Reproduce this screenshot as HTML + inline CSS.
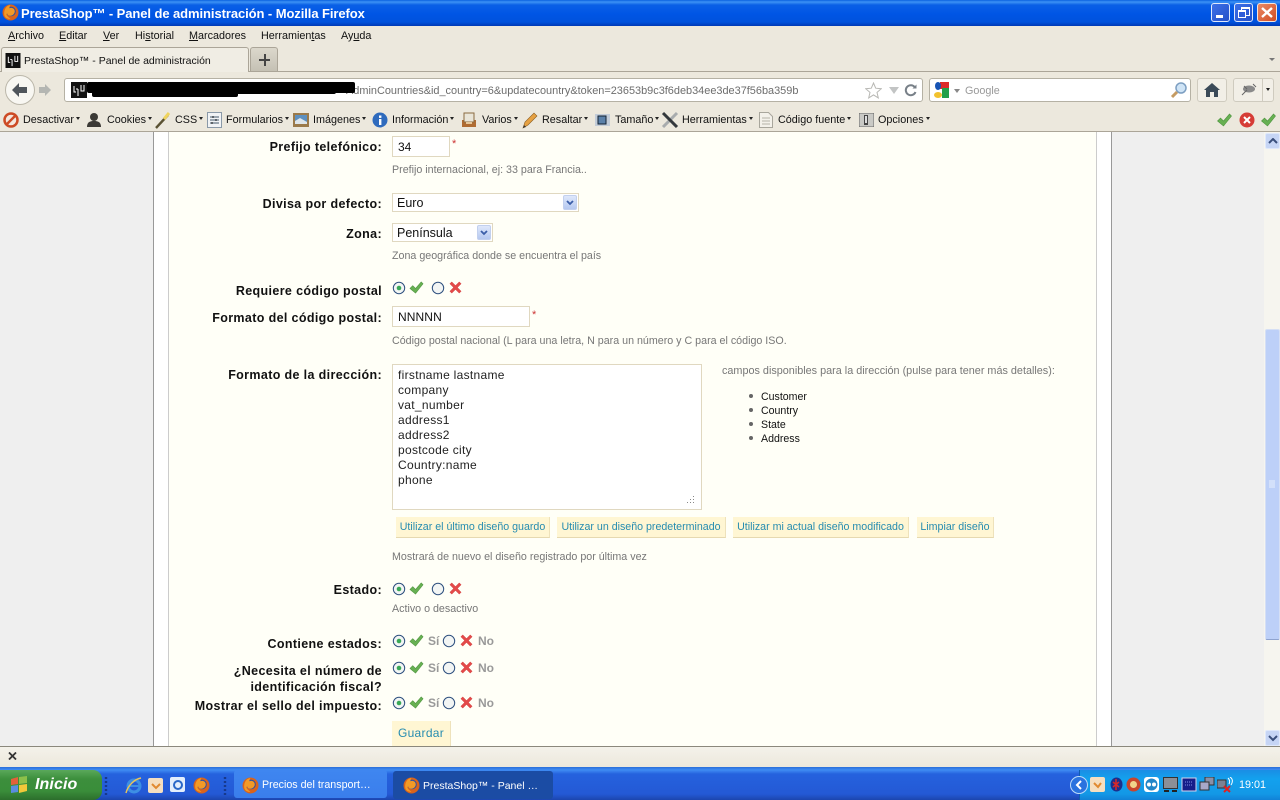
<!DOCTYPE html>
<html><head><meta charset="utf-8"><title>PrestaShop</title>
<style>
html,body{margin:0;padding:0;width:1280px;height:800px;overflow:hidden;background:#efefef;font-family:"Liberation Sans",sans-serif;}
#r{position:relative;width:1280px;height:800px;overflow:hidden}
.a,.t,.l,.h,.b,svg.i{position:absolute}
.a{display:block}
.t{white-space:nowrap;font-size:10.8px;line-height:14px;color:#111;margin-top:1px}
.l{right:898px;text-align:right;font-weight:bold;font-size:12.5px;line-height:16px;letter-spacing:.36px;color:#111;white-space:nowrap}
.h{white-space:nowrap;font-size:10.7px;line-height:14px;color:#777;left:392px;margin-top:1px}
.b{height:20px;line-height:20px;background:#fff6d3;color:#268cb0;font-size:10.65px;text-align:center;border-right:1px solid #eee2bb;border-bottom:1px solid #e6d9b0;white-space:nowrap}
.in{position:absolute;box-sizing:border-box;background:#fff;border:1px solid #e0d8c0;font-size:12px;color:#111;padding-left:5px;white-space:nowrap}
.ar{position:absolute;width:14px;background:linear-gradient(#dfe8fb,#b5c8f0);border:1px solid #c2d0ee;border-radius:2px;box-sizing:border-box}
.s{position:absolute;color:#999;font-weight:bold;font-size:12px;line-height:14px}
.dd{display:inline-block;width:0;height:0;border:2px solid transparent;border-top:3px solid #222;margin-left:2px;vertical-align:1px}
.red{position:absolute;color:#c33;font-size:11px;line-height:12px}
</style></head>
<body><div id="r">
<svg width="0" height="0" style="position:absolute">
<defs>
<symbol id="ff" viewBox="0 0 16 16"><circle cx="8" cy="8" r="7.5" fill="#d9631b"/><circle cx="8.5" cy="7" r="4.5" fill="#32509f"/><path d="M2 9C2 4 5 1 8 1c-1 1-1 2-1 3 2-1 5 0 5 3 0 2-2 4-4 4-2 0-3-1-3-2-1 0-2 1 3 5-4 0-6-2-6-5z" fill="#f29a26"/></symbol>
<symbol id="ck" viewBox="0 0 16 16"><path d="M1 9l3-3 3 3 6-7 2 2-8 10z" fill="#67b052" stroke="#4f9440" stroke-width=".6"/></symbol>
<symbol id="xx" viewBox="0 0 16 16"><path d="M2 4l2-2 4 4 4-4 2 2-4 4 4 4-2 2-4-4-4 4-2-2 4-4z" fill="#e34a4a" stroke="#cf3b3b" stroke-width=".5"/></symbol>
<symbol id="ron" viewBox="0 0 14 14"><circle cx="7" cy="7" r="5.7" fill="#f2f5f4" stroke="#2d4f7e"/><circle cx="7" cy="7" r="2.3" fill="#39a857"/></symbol>
<symbol id="rof" viewBox="0 0 14 14"><circle cx="7" cy="7" r="5.7" fill="#f2f5f4" stroke="#2d4f7e"/></symbol>
<symbol id="fav" viewBox="0 0 16 16"><rect width="16" height="16" fill="#111"/><path d="M3 4v6h2M7 7v7M7 7h-2M10 3v6h3V3" stroke="#fff" fill="none"/></symbol>
</defs></svg>

<!-- title bar -->
<div class="a" style="left:0;top:0;width:1280px;height:26px;background:linear-gradient(#0a62e0 0,#3d92f5 2px,#0a60e6 5px,#0055e5 14px,#0052dd 22px,#0039b5 26px)"></div>
<svg class="i" style="left:2px;top:4px" width="17" height="17"><use href="#ff"/></svg>
<div class="t" style="left:21px;top:5px;margin-top:0;font-size:13px;line-height:17px;font-weight:bold;color:#fff;letter-spacing:-.08px">PrestaShop™ - Panel de administración - Mozilla Firefox</div>
<div class="a" style="left:1211px;top:3px;width:19px;height:19px;box-sizing:border-box;background:linear-gradient(135deg,#3c70e8,#2550c8);border:1px solid #dfe8fb;border-radius:3px"><div class="a" style="left:4px;top:11px;width:7px;height:3px;background:#fff"></div></div>
<div class="a" style="left:1234px;top:3px;width:19px;height:19px;box-sizing:border-box;background:linear-gradient(135deg,#3c70e8,#2550c8);border:1px solid #dfe8fb;border-radius:3px"><div class="a" style="left:6px;top:3px;width:7px;height:6px;border:1px solid #fff;border-top-width:2px"></div><div class="a" style="left:3px;top:6px;width:6px;height:5px;border:1px solid #fff;border-top-width:2px;background:#2f5dd8"></div></div>
<div class="a" style="left:1257px;top:3px;width:20px;height:19px;box-sizing:border-box;background:linear-gradient(135deg,#ea8a66,#d24d23);border:1px solid #f4e4dc;border-radius:3px"><svg class="i" style="left:3px;top:3px" width="12" height="11"><path d="M1 1l10 9M11 1L1 10" stroke="#fff" stroke-width="2.4"/></svg></div>

<!-- menu + chrome -->
<div class="a" style="left:0;top:26px;width:1280px;height:105px;background:#ece8dd"></div>
<div class="t" style="left:8px;top:28px"><u>A</u>rchivo</div>
<div class="t" style="left:59px;top:28px"><u>E</u>ditar</div>
<div class="t" style="left:103px;top:28px"><u>V</u>er</div>
<div class="t" style="left:135px;top:28px">Hi<u>s</u>torial</div>
<div class="t" style="left:189px;top:28px"><u>M</u>arcadores</div>
<div class="t" style="left:261px;top:28px">Herramien<u>t</u>as</div>
<div class="t" style="left:341px;top:28px">Ay<u>u</u>da</div>
<div class="a" style="left:0;top:71px;width:1280px;height:1px;background:#aba598"></div>
<div class="a" style="left:1px;top:47px;width:248px;height:25px;box-sizing:border-box;background:#f0ede4;border:1px solid #aba598;border-bottom:0;border-radius:3px 3px 0 0"></div>
<svg class="i" style="left:5px;top:53px" width="16" height="15"><use href="#fav"/></svg>
<div class="t" style="left:24px;top:53px;font-size:10.5px">PrestaShop™ - Panel de administración</div>
<div class="a" style="left:250px;top:47px;width:28px;height:24px;box-sizing:border-box;background:linear-gradient(#dcd8cc,#c5c1b4);border:1px solid #aba598;border-bottom:0;border-radius:3px 3px 0 0"></div>
<div class="a" style="left:259px;top:59px;width:11px;height:2px;background:#444"></div><div class="a" style="left:264px;top:54px;width:2px;height:12px;background:#444"></div>
<div class="a" style="left:1269px;top:58px;width:0;height:0;border:3px solid transparent;border-top:3px solid #777"></div>

<!-- nav -->
<div class="a" style="left:5px;top:75px;width:30px;height:30px;box-sizing:border-box;border-radius:50%;background:#f8f7f2;border:1px solid #bbb7aa"></div>
<svg class="i" style="left:11px;top:82px" width="18" height="16"><path d="M1 8l7-7v4h8v6H8v4z" fill="#50565c"/></svg>
<svg class="i" style="left:38px;top:83px" width="14" height="14"><path d="M13 7L7 1v3H1v6h6v3z" fill="#b4b6b2"/></svg>
<div class="a" style="left:64px;top:78px;width:859px;height:24px;box-sizing:border-box;background:#fff;border:1px solid #b5b1a4;border-radius:3px"></div>
<svg class="i" style="left:71px;top:82px" width="16" height="16"><use href="#fav"/></svg>
<div class="t" style="left:346px;top:83px;color:#6d6d6d;font-size:10.93px">AdminCountries&amp;id_country=6&amp;updatecountry&amp;token=23653b9c3f6deb34ee3de37f56ba359b</div>
<div class="a" style="left:87px;top:82px;width:268px;height:11px;background:#000;border-radius:2px"></div>
<div class="a" style="left:92px;top:88px;width:146px;height:9px;background:#000;border-radius:2px"></div>
<div class="a" style="left:236px;top:88px;width:100px;height:6px;background:#000;border-radius:2px"></div>
<svg class="i" style="left:865px;top:82px" width="17" height="17"><path d="M8.500 1l2.200 5.200 5.600.5-4.300 3.700 1.300 5.500-4.800-3-4.800 3 1.300-5.500L.7 6.700l5.600-.5z" fill="#fff" stroke="#b8b8b4"/></svg>
<div class="a" style="left:889px;top:87px;width:0;height:0;border:5px solid transparent;border-top:7px solid #c2c4c4"></div>
<svg class="i" style="left:904px;top:84px" width="13" height="13"><path d="M11 3.500A5 5 0 1 0 11.500 8" fill="none" stroke="#788088" stroke-width="2"/><path d="M8.500 4.500h4v-4z" fill="#788088"/></svg>
<div class="a" style="left:929px;top:78px;width:262px;height:24px;box-sizing:border-box;background:#fff;border:1px solid #b5b1a4;border-radius:3px"></div>
<svg class="i" style="left:933px;top:81px" width="17" height="18"><rect x="7" y="1" width="9" height="7" fill="#dd2a28"/><rect x="9" y="7" width="7" height="10" fill="#22a04a"/><ellipse cx="5" cy="5" rx="3" ry="4" fill="#1754b4"/><ellipse cx="5" cy="14" rx="4" ry="3" fill="#f2c22e"/></svg>
<div class="a" style="left:954px;top:89px;width:0;height:0;border:3px solid transparent;border-top:4px solid #888"></div>
<div class="t" style="left:965px;top:83px;color:#999">Google</div>
<svg class="i" style="left:1170px;top:81px" width="18" height="18"><circle cx="11" cy="7" r="5" fill="#cfe4f6" stroke="#7d9fc2" stroke-width="1.500"/><path d="M7 11L2 16" stroke="#c59b63" stroke-width="3"/></svg>
<div class="a" style="left:1197px;top:78px;width:30px;height:24px;box-sizing:border-box;background:#f2efe7;border:1px solid #cfcbbf;border-radius:3px"></div>
<svg class="i" style="left:1204px;top:83px" width="16" height="14"><path d="M8 0L0 7h2v7h4V9h4v5h4V7h2z" fill="#3b4a58"/></svg>
<div class="a" style="left:1233px;top:78px;width:41px;height:24px;box-sizing:border-box;background:#f2efe7;border:1px solid #cfcbbf;border-radius:3px"></div>
<div class="a" style="left:1262px;top:79px;width:1px;height:22px;background:#cfcbbf"></div>
<svg class="i" style="left:1241px;top:83px" width="16" height="13"><ellipse cx="8" cy="6" rx="6" ry="3.500" fill="#8a8a8a"/><path d="M1 12l5-5M12 1l3 3M3 3l3 3" stroke="#666"/></svg>
<div class="a" style="left:1266px;top:88px;width:0;height:0;border:2.500px solid transparent;border-top:3px solid #222"></div>

<!-- toolbar -->
<svg class="i" style="left:3px;top:112px" width="16" height="16"><circle cx="8" cy="8" r="6.500" fill="#f4e8df" stroke="#cd4b25" stroke-width="2.500"/><path d="M3.500 12.500l9-9" stroke="#cd4b25" stroke-width="2.500"/></svg>
<div class="t" style="left:23px;top:112px">Desactivar<i class="dd"></i></div>
<svg class="i" style="left:86px;top:112px" width="16" height="16"><circle cx="8" cy="5" r="4" fill="#3c3a36"/><path d="M1 15c0-5 3-6 7-6s7 1 7 6z" fill="#3c3a36"/></svg>
<div class="t" style="left:107px;top:112px">Cookies<i class="dd"></i></div>
<svg class="i" style="left:155px;top:112px" width="16" height="17"><path d="M1 16L13 3" stroke="#5a5233" stroke-width="2.400"/><path d="M9 7l5-6" stroke="#f0d45e" stroke-width="3"/></svg>
<div class="t" style="left:175px;top:112px">CSS<i class="dd"></i></div>
<svg class="i" style="left:207px;top:112px" width="15" height="16"><rect x=".5" y=".5" width="14" height="15" fill="#f1f3f5" stroke="#8a99a8"/><path d="M3 5h9M3 8h9M3 11h9" stroke="#45586a"/><path d="M6 4v2M9 7v2M5 10v2" stroke="#222"/></svg>
<div class="t" style="left:226px;top:112px">Formularios<i class="dd"></i></div>
<svg class="i" style="left:293px;top:113px" width="16" height="14"><rect width="16" height="14" fill="#9b7a4a"/><rect x="2" y="2" width="12" height="9" fill="#5e90bf"/><path d="M2 8l5-3 7 4v2H2z" fill="#dfe6ea"/></svg>
<div class="t" style="left:313px;top:112px">Imágenes<i class="dd"></i></div>
<svg class="i" style="left:372px;top:112px" width="16" height="16"><circle cx="8" cy="8" r="7.500" fill="#2f6bbd"/><rect x="7" y="7" width="2.400" height="6" fill="#fff"/><rect x="7" y="3.500" width="2.400" height="2.400" fill="#fff"/></svg>
<div class="t" style="left:392px;top:112px">Información<i class="dd"></i></div>
<svg class="i" style="left:461px;top:112px" width="16" height="16"><rect x="1" y="8" width="14" height="7" fill="#b06c32"/><rect x="3" y="1" width="10" height="9" fill="#e9e5d8" stroke="#8a6a40"/><rect x="5" y="10" width="6" height="2" fill="#e6c79a"/></svg>
<div class="t" style="left:482px;top:112px">Varios<i class="dd"></i></div>
<svg class="i" style="left:522px;top:112px" width="16" height="17"><path d="M1 16l2-6L12 1l3 3-9 9z" fill="#e6a142" stroke="#8b5e22" stroke-width=".6"/><path d="M1 16l1-3 2 2z" fill="#333"/></svg>
<div class="t" style="left:542px;top:112px">Resaltar<i class="dd"></i></div>
<svg class="i" style="left:595px;top:113px" width="15" height="14"><rect x="0" y="1" width="15" height="12" fill="#c2ccd8"/><rect x="3" y="3" width="8" height="8" fill="#5a80a8" stroke="#123" /></svg>
<div class="t" style="left:615px;top:112px">Tamaño<i class="dd"></i></div>
<svg class="i" style="left:661px;top:111px" width="18" height="18"><path d="M16 2L2 16" stroke="#a8acae" stroke-width="3"/><path d="M2 2l14 14" stroke="#33383c" stroke-width="3"/></svg>
<div class="t" style="left:682px;top:112px">Herramientas<i class="dd"></i></div>
<svg class="i" style="left:759px;top:112px" width="14" height="16"><path d="M.5.500h9l4 4v11H.5z" fill="#f3f1ea" stroke="#a8a69c"/><path d="M3 6h8M3 9h8M3 12h8" stroke="#b4b2a8"/></svg>
<div class="t" style="left:778px;top:112px">Código fuente<i class="dd"></i></div>
<svg class="i" style="left:859px;top:113px" width="15" height="14"><rect width="15" height="14" fill="#c9c9c5" stroke="#666"/><rect x="5" y="2" width="4" height="10" fill="#444"/><rect x="6" y="3" width="2" height="7" fill="#ddd"/></svg>
<div class="t" style="left:878px;top:112px">Opciones<i class="dd"></i></div>
<svg class="i" style="left:1216px;top:112px" width="17" height="16"><use href="#ck"/></svg>
<svg class="i" style="left:1239px;top:112px" width="16" height="16"><circle cx="8" cy="8" r="7.500" fill="#d63c36"/><path d="M5 5l6 6M11 5l-6 6" stroke="#fff" stroke-width="2"/></svg>
<svg class="i" style="left:1260px;top:112px" width="17" height="16"><use href="#ck"/></svg>
<div class="a" style="left:0;top:131px;width:1280px;height:1px;background:#aba598"></div>

<!-- page -->
<div class="a" style="left:0;top:132px;width:1264px;height:614px;background:#efefef"></div>
<div class="a" style="left:153px;top:132px;width:957px;height:614px;background:#fff;border-left:1px solid #999;border-right:1px solid #999"></div>
<div class="a" style="left:168px;top:132px;width:927px;height:614px;background:#fffff7;border-left:1px solid #ccc;border-right:1px solid #ccc"></div>

<div class="l" style="top:139px">Prefijo telefónico:</div>
<div class="in" style="left:392px;top:136px;width:58px;height:21px;line-height:20px;">34</div>
<div class="red" style="left:452px;top:138px">*</div>
<div class="h" style="top:162px">Prefijo internacional, ej: 33 para Francia..</div>

<div class="l" style="top:196px">Divisa por defecto:</div>
<div class="in" style="left:392px;top:193px;width:187px;height:19px;line-height:19px;font-size:12.500px;padding-left:4px">Euro<div class="ar" style="left:170px;top:1px;height:15px"><svg class="i" style="left:2px;top:4px" width="8" height="6"><path d="M1 1l3 3 3-3" fill="none" stroke="#3b5ea8" stroke-width="1.800"/></svg></div></div>
<div class="l" style="top:226px">Zona:</div>
<div class="in" style="left:392px;top:223px;width:101px;height:19px;line-height:19px;font-size:12.500px;padding-left:4px">Península<div class="ar" style="left:84px;top:1px;height:15px"><svg class="i" style="left:2px;top:4px" width="8" height="6"><path d="M1 1l3 3 3-3" fill="none" stroke="#3b5ea8" stroke-width="1.800"/></svg></div></div>
<div class="h" style="top:248px">Zona geográfica donde se encuentra el país</div>

<div class="l" style="top:283px">Requiere código postal</div>
<svg class="i" style="left:392px;top:281px" width="14" height="14"><use href="#ron"/></svg>
<svg class="i" style="left:409px;top:280px" width="15" height="15"><use href="#ck"/></svg>
<svg class="i" style="left:431px;top:281px" width="14" height="14"><use href="#rof"/></svg>
<svg class="i" style="left:448px;top:280px" width="15" height="15"><use href="#xx"/></svg>

<div class="l" style="top:310px">Formato del código postal:</div>
<div class="in" style="left:392px;top:306px;width:138px;height:21px;line-height:20px;font-size:12px;letter-spacing:.1px">NNNNN</div>
<div class="red" style="left:532px;top:309px">*</div>
<div class="h" style="top:333px">Código postal nacional (L para una letra, N para un número y C para el código ISO.</div>

<div class="l" style="top:367px">Formato de la dirección:</div>
<div class="a" style="left:392px;top:364px;width:310px;height:146px;box-sizing:border-box;background:#fff;border:1px solid #e0d8c0"></div>
<div class="t" style="left:398px;top:367px;font-size:12px;line-height:15px;color:#222;letter-spacing:.3px">firstname lastname<br>company<br>vat_number<br>address1<br>address2<br>postcode city<br>Country:name<br>phone</div>
<svg class="i" style="left:684px;top:495px" width="11" height="10"><path d="M9 1h1v1H9zM6 4h1v1H6zM9 4h1v1H9zM3 7h1v1H3zM6 7h1v1H6zM9 7h1v1H9z" fill="#888"/></svg>
<div class="t" style="left:722px;top:363px;color:#777;font-size:10.84px">campos disponibles para la dirección (pulse para tener más detalles):</div>
<div class="a" style="left:749px;top:394px;width:4px;height:4px;border-radius:50%;background:#666"></div><div class="t" style="left:761px;top:389px;font-size:10.6px">Customer</div>
<div class="a" style="left:749px;top:408px;width:4px;height:4px;border-radius:50%;background:#666"></div><div class="t" style="left:761px;top:403px;font-size:10.6px">Country</div>
<div class="a" style="left:749px;top:422px;width:4px;height:4px;border-radius:50%;background:#666"></div><div class="t" style="left:761px;top:417px;font-size:10.6px">State</div>
<div class="a" style="left:749px;top:436px;width:4px;height:4px;border-radius:50%;background:#666"></div><div class="t" style="left:761px;top:431px;font-size:10.6px">Address</div>

<div class="b" style="left:396px;top:517px;width:153px">Utilizar el último diseño guardo</div>
<div class="b" style="left:557px;top:517px;width:168px">Utilizar un diseño predeterminado</div>
<div class="b" style="left:733px;top:517px;width:175px">Utilizar mi actual diseño modificado</div>
<div class="b" style="left:917px;top:517px;width:76px">Limpiar diseño</div>
<div class="h" style="top:549px">Mostrará de nuevo el diseño registrado por última vez</div>

<div class="l" style="top:582px">Estado:</div>
<svg class="i" style="left:392px;top:582px" width="14" height="14"><use href="#ron"/></svg>
<svg class="i" style="left:409px;top:581px" width="15" height="15"><use href="#ck"/></svg>
<svg class="i" style="left:431px;top:582px" width="14" height="14"><use href="#rof"/></svg>
<svg class="i" style="left:448px;top:581px" width="15" height="15"><use href="#xx"/></svg>
<div class="h" style="top:601px">Activo o desactivo</div>

<div class="l" style="top:636px">Contiene estados:</div>
<svg class="i" style="left:392px;top:634px" width="14" height="14"><use href="#ron"/></svg>
<svg class="i" style="left:409px;top:633px" width="15" height="15"><use href="#ck"/></svg>
<div class="s" style="left:428px;top:634px">Sí</div>
<svg class="i" style="left:442px;top:634px" width="14" height="14"><use href="#rof"/></svg>
<svg class="i" style="left:459px;top:633px" width="15" height="15"><use href="#xx"/></svg>
<div class="s" style="left:478px;top:634px">No</div>

<div class="l" style="top:663px">¿Necesita el número de</div>
<div class="l" style="top:679px">identificación fiscal?</div>
<svg class="i" style="left:392px;top:661px" width="14" height="14"><use href="#ron"/></svg>
<svg class="i" style="left:409px;top:660px" width="15" height="15"><use href="#ck"/></svg>
<div class="s" style="left:428px;top:661px">Sí</div>
<svg class="i" style="left:442px;top:661px" width="14" height="14"><use href="#rof"/></svg>
<svg class="i" style="left:459px;top:660px" width="15" height="15"><use href="#xx"/></svg>
<div class="s" style="left:478px;top:661px">No</div>

<div class="l" style="top:698px">Mostrar el sello del impuesto:</div>
<svg class="i" style="left:392px;top:696px" width="14" height="14"><use href="#ron"/></svg>
<svg class="i" style="left:409px;top:695px" width="15" height="15"><use href="#ck"/></svg>
<div class="s" style="left:428px;top:696px">Sí</div>
<svg class="i" style="left:442px;top:696px" width="14" height="14"><use href="#rof"/></svg>
<svg class="i" style="left:459px;top:695px" width="15" height="15"><use href="#xx"/></svg>
<div class="s" style="left:478px;top:696px">No</div>

<div class="b" style="left:392px;top:721px;width:58px;height:25px;line-height:25px;font-size:12px;border-bottom:0;letter-spacing:.3px">Guardar</div>

<!-- scrollbar -->
<div class="a" style="left:1264px;top:132px;width:16px;height:614px;background:#f6f5ef"></div>
<div class="a" style="left:1265px;top:133px;width:15px;height:16px;box-sizing:border-box;background:#c6d5f5;border:1px solid #dfe8fb;border-radius:2px"><svg class="i" style="left:2px;top:4px" width="10" height="7"><path d="M1 5l4-4 4 4" fill="none" stroke="#3a4f7c" stroke-width="2"/></svg></div>
<div class="a" style="left:1265px;top:329px;width:15px;height:311px;box-sizing:border-box;background:#bdd0f8;border:1px solid #d5dff5;border-bottom:1px solid #8ea3cf;border-radius:2px"></div>
<svg class="i" style="left:1268px;top:480px" width="8" height="9"><path d="M1 1h6M1 3h6M1 5h6M1 7h6" stroke="#e9effb"/></svg>
<div class="a" style="left:1265px;top:730px;width:15px;height:16px;box-sizing:border-box;background:#c6d5f5;border:1px solid #dfe8fb;border-radius:2px"><svg class="i" style="left:2px;top:4px" width="10" height="7"><path d="M1 1l4 4 4-4" fill="none" stroke="#3a4f7c" stroke-width="2"/></svg></div>

<!-- find bar -->
<div class="a" style="left:0;top:746px;width:1280px;height:21px;box-sizing:border-box;background:linear-gradient(#f4f2ea,#ece8dc);border-top:1px solid #8b887c"></div>
<svg class="i" style="left:8px;top:752px" width="9" height="8"><path d="M1 .5l7 7M8 .5l-7 7" stroke="#333" stroke-width="1.800"/></svg>

<!-- taskbar -->
<div class="a" style="left:0;top:767px;width:1280px;height:33px;background:linear-gradient(#2a6ed8 0,#3f8cf3 3px,#2562de 7px,#2459d5 27px,#1c45ae 33px)"></div>
<div class="a" style="left:0;top:770px;width:102px;height:30px;background:linear-gradient(#5aa85a,#3c8f3c 30%,#3a8d3a 70%,#2c6e2c);border-radius:0 9px 9px 0"></div>
<svg class="i" style="left:10px;top:776px" width="18" height="18"><path d="M1 3l7-2v7l-7 1z" fill="#e2603a"/><path d="M9 1l8-1v7l-8 1z" fill="#8dc04a"/><path d="M1 10l7-1v7l-7 1z" fill="#5a8de0"/><path d="M9 9l8-1v7l-8 2z" fill="#f2c83a"/></svg>
<div class="t" style="left:35px;top:775px;margin-top:0;color:#fff;font-style:italic;font-weight:bold;font-size:16px;line-height:20px;letter-spacing:.1px">Inicio</div>
<svg class="i" style="left:104px;top:776px" width="6" height="21"><path d="M2 1v20" stroke="#17398c" stroke-width="2.400" stroke-dasharray="2 2"/></svg>
<svg class="i" style="left:125px;top:777px" width="17" height="17"><circle cx="9" cy="9" r="6" fill="none" stroke="#3d8fe4" stroke-width="3"/><path d="M3 9h12" stroke="#3d8fe4" stroke-width="2"/><path d="M1 16C3 8 10 2 16 1" fill="none" stroke="#e8c55c" stroke-width="1.500"/></svg>
<svg class="i" style="left:148px;top:777px" width="16" height="17"><rect y="1" width="15" height="15" rx="2" fill="#f5dfc0"/><path d="M4 7l4 4 4-4" fill="none" stroke="#e18a30" stroke-width="2"/></svg>
<svg class="i" style="left:170px;top:777px" width="16" height="15"><rect width="15" height="15" rx="2" fill="#e3eefc"/><circle cx="8" cy="8" r="4" fill="none" stroke="#2a68c8" stroke-width="2"/></svg>
<svg class="i" style="left:193px;top:777px" width="17" height="17"><use href="#ff"/></svg>
<svg class="i" style="left:223px;top:776px" width="6" height="21"><path d="M2 1v20" stroke="#17398c" stroke-width="2.400" stroke-dasharray="2 2"/></svg>
<div class="a" style="left:234px;top:770px;width:153px;height:28px;background:linear-gradient(#3f86f0,#3a7eec);border-radius:3px"></div>
<svg class="i" style="left:242px;top:777px" width="17" height="17"><use href="#ff"/></svg>
<div class="t" style="left:262px;top:777px;color:#fff;font-size:10.7px">Precios del transport…</div>
<div class="a" style="left:393px;top:771px;width:160px;height:28px;background:#1b4ca4;border-radius:3px"></div>
<svg class="i" style="left:403px;top:777px" width="17" height="17"><use href="#ff"/></svg>
<div class="t" style="left:423px;top:778px;color:#fff;font-size:10.5px">PrestaShop™ - Panel …</div>

<!-- tray -->
<div class="a" style="left:1079px;top:770px;width:201px;height:30px;background:linear-gradient(#1a8ee4,#13a1ee 30%,#1398e6 80%,#1181d6);border-left:1px solid #0f5cb0"></div>
<svg class="i" style="left:1070px;top:776px" width="18" height="18"><circle cx="9" cy="9" r="8.500" fill="#2a73df" stroke="#bcdcfa"/><path d="M11 5L7 9l4 4" fill="none" stroke="#fff" stroke-width="2"/></svg>
<svg class="i" style="left:1090px;top:777px" width="15" height="15"><rect width="15" height="15" rx="2" fill="#f5dfc0"/><path d="M4 6l4 4 3-4" fill="none" stroke="#e18a30" stroke-width="2"/></svg>
<svg class="i" style="left:1110px;top:777px" width="13" height="15"><ellipse cx="6.500" cy="7.500" rx="6" ry="7" fill="#1c2f8c"/><path d="M6 2v11M3 5l6 5M3 10l6-5" stroke="#d82828" stroke-width="1.500"/></svg>
<svg class="i" style="left:1126px;top:777px" width="15" height="15"><circle cx="7.500" cy="7.500" r="7" fill="#c8452c"/><circle cx="7.500" cy="7.500" r="3.500" fill="#f1d48a"/></svg>
<svg class="i" style="left:1144px;top:777px" width="15" height="15"><rect width="15" height="15" rx="3" fill="#fff"/><circle cx="7.500" cy="7.500" r="6" fill="#2386c8"/><circle cx="5" cy="7.500" r="2" fill="#fff"/><circle cx="10" cy="7.500" r="2" fill="#fff"/></svg>
<svg class="i" style="left:1163px;top:777px" width="15" height="16"><rect x=".5" y=".5" width="14" height="11" fill="#8b8f96" stroke="#333"/><path d="M1 14h5M9 14h5" stroke="#222" stroke-width="2"/></svg>
<svg class="i" style="left:1181px;top:777px" width="16" height="15"><rect x="1" y="1" width="14" height="13" fill="#151e8a" stroke="#d4d4ec"/><path d="M4 5h8M4 8h8" stroke="#7f8fe8" stroke-dasharray="1 1"/></svg>
<svg class="i" style="left:1199px;top:777px" width="16" height="15"><rect x="6" y="0" width="9" height="8" fill="#8a90a8" stroke="#333"/><rect x="1" y="5" width="9" height="8" fill="#a8a8c8" stroke="#333"/></svg>
<svg class="i" style="left:1217px;top:777px" width="16" height="16"><rect x="0" y="3" width="9" height="8" fill="#7a8294" stroke="#333"/><path d="M11 1c2 2 2 4 1 6M13 0c3 2 3 5 1 8" stroke="#fff" fill="none"/><path d="M7 9l6 6M13 9l-6 6" stroke="#e02020" stroke-width="2"/></svg>
<div class="t" style="left:1239px;top:777px;color:#fff">19:01</div>
</div></body></html>
